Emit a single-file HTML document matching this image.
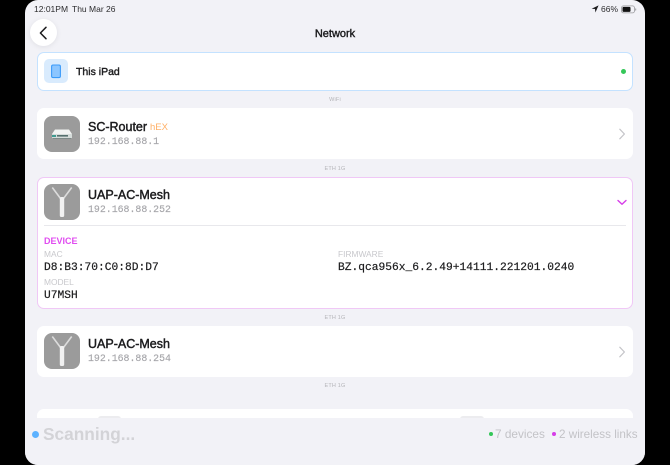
<!DOCTYPE html>
<html>
<head>
<meta charset="utf-8">
<style>
html,body{margin:0;padding:0;width:670px;height:465px;overflow:hidden;background:#000;}
body{font-family:"Liberation Sans",sans-serif;position:relative;}
.a{position:absolute;white-space:nowrap;}
#screen{position:absolute;left:25px;top:0;width:620px;height:465px;background:#f2f2f7;border-radius:13px;overflow:hidden;}
.card{position:absolute;left:37px;width:596px;background:#fff;border-radius:7px;box-sizing:border-box;}
.name{font-size:12.5px;color:#1c1c1e;line-height:16px;-webkit-text-stroke:.45px #1c1c1e;}
.ip{font-family:"Liberation Mono",monospace;font-size:9.9px;color:#a6a6aa;line-height:12px;-webkit-text-stroke:.15px #a6a6aa;}
.conn{font-size:5.5px;color:#b4b4b8;line-height:8px;width:596px;left:37px;text-align:center;letter-spacing:.2px;}
.lab{font-size:8.4px;color:#c8c8cc;line-height:10px;}
.val{font-family:"Liberation Mono",monospace;font-size:11.25px;color:#1c1c1e;line-height:14px;-webkit-text-stroke:.2px #1c1c1e;}
.ic{position:absolute;left:44px;width:36px;height:36px;}
</style>
</head>
<body>
<div id="screen"></div>

<div class="a" style="left:34px;top:4px;font-size:8.5px;line-height:10px;color:#2c2c2e;">12:01PM</div>
<div class="a" style="left:72px;top:4px;font-size:8.5px;line-height:10px;color:#2c2c2e;">Thu Mar 26</div>
<svg class="a" style="left:591px;top:5px" width="8" height="8" viewBox="0 0 8 8"><path d="M7.600.4 .6 3.700l3.400.3.4 3.500z" fill="#1c1c1e"/></svg>
<div class="a" style="left:601px;top:4px;font-size:8.5px;line-height:10px;color:#2c2c2e;">66%</div>
<svg class="a" style="left:621px;top:5px" width="16" height="9" viewBox="0 0 16 9"><rect x=".5" y=".9" width="13" height="7" rx="2" fill="none" stroke="#9a9a9e" stroke-width=".8"/><rect x="1.500" y="1.900" width="8" height="5" rx="1" fill="#111"/><rect x="14.200" y="3.400" width="1" height="2.200" rx=".5" fill="#9a9a9e"/></svg>

<div class="a" style="left:30px;top:19px;width:27px;height:27px;border-radius:50%;background:#fff;box-shadow:0 1px 6px rgba(0,0,0,.08);"></div>
<svg class="a" style="left:38px;top:26px" width="12" height="14" viewBox="0 0 12 14"><path d="M8 1.300 2.400 7 8 12.700" fill="none" stroke="#1c1c1e" stroke-width="1.500" stroke-linecap="round" stroke-linejoin="round"/></svg>
<div class="a" style="left:25px;width:620px;top:27px;text-align:center;font-size:11px;line-height:15px;color:#1c1c1e;-webkit-text-stroke:.4px #1c1c1e;">Network</div>

<!-- This iPad -->
<div class="card" style="top:52px;height:39px;border:1.5px solid #c4e2ff;"></div>
<div class="a" style="left:44px;top:59px;width:24px;height:24px;border-radius:5px;background:#d9ebfd;"></div>
<svg class="a" style="left:50px;top:64px" width="12" height="15" viewBox="0 0 12 15"><rect x="1.600" y="1" width="8.800" height="12.600" rx="1.500" fill="#8cc6ff" stroke="#3a9bfa" stroke-width="1.100"/></svg>
<div class="a" style="left:76px;top:65px;font-size:10.5px;line-height:15px;color:#1c1c1e;-webkit-text-stroke:.4px #1c1c1e;">This iPad</div>
<div class="a" style="left:621px;top:69px;width:5px;height:5px;border-radius:50%;background:#34c759;"></div>

<div class="a conn" style="top:96px;">WiFi</div>

<!-- SC-Router -->
<div class="card" style="top:108px;height:51px;"></div>
<svg class="ic" style="top:116px" viewBox="0 0 36 36"><rect width="36" height="36" rx="8" fill="#9b9b9b"/><path d="M11 13.500H25L28 18H8z" fill="#f1f3f2"/><rect x="8" y="18" width="20" height="4" fill="#d5dcda"/><rect x="8" y="19" width="4" height="2" fill="#3f9a90"/><rect x="13" y="19" width="11" height="1.600" fill="#55706e"/><rect x="9" y="22" width="18" height="1" fill="#7d8a88"/></svg>
<div class="a name" style="left:88px;top:119px;">SC-Router</div>
<div class="a" style="left:150px;top:122px;font-size:9.5px;line-height:12px;color:#ffb066;">hEX</div>
<div class="a ip" style="left:88px;top:136px;">192.168.88.1</div>
<svg class="a" style="left:618px;top:128px" width="8" height="12" viewBox="0 0 8 12"><path d="M1.800 1.200 6.400 6l-4.600 4.800" fill="none" stroke="#c4c4c8" stroke-width="1.200" stroke-linecap="round" stroke-linejoin="round"/></svg>

<div class="a conn" style="top:165px;">ETH 1G</div>

<!-- UAP expanded -->
<div class="card" style="top:177px;height:132px;border:1.5px solid #f0c8f6;"></div>
<svg class="ic" style="top:184px" viewBox="0 0 36 36"><rect width="36" height="36" rx="8" fill="#9b9b9b"/><path d="M8.300 3.500 16.500 14.500M27.700 3.500 19.500 14.500" stroke="#dcdcdc" stroke-width="1.600" fill="none"/><rect x="15.800" y="13" width="4.400" height="20" rx="1.500" fill="#f1f1f1"/></svg>
<div class="a name" style="left:88px;top:187px;">UAP-AC-Mesh</div>
<div class="a ip" style="left:88px;top:204px;">192.168.88.252</div>
<svg class="a" style="left:616px;top:198px" width="12" height="9" viewBox="0 0 12 9"><path d="M2 2.500 6 6.300l4-3.800" fill="none" stroke="#d63ee8" stroke-width="1.400" stroke-linecap="round" stroke-linejoin="round"/></svg>
<div class="a" style="left:44px;top:225px;width:582px;height:1px;background:#e8e8ec;"></div>
<div class="a" style="left:44px;top:236px;font-size:9px;font-weight:700;line-height:10px;color:#e04cf0;">DEVICE</div>
<div class="a lab" style="left:44px;top:249px;">MAC</div>
<div class="a val" style="left:44px;top:261px;">D8:B3:70:C0:8D:D7</div>
<div class="a lab" style="left:338px;top:249px;">FIRMWARE</div>
<div class="a val" style="left:338px;top:261px;">BZ.qca956x_6.2.49+14111.221201.0240</div>
<div class="a lab" style="left:44px;top:277px;">MODEL</div>
<div class="a val" style="left:44px;top:289px;">U7MSH</div>

<div class="a conn" style="top:314px;">ETH 1G</div>

<!-- UAP -->
<div class="card" style="top:326px;height:51px;"></div>
<svg class="ic" style="top:333px" viewBox="0 0 36 36"><rect width="36" height="36" rx="8" fill="#9b9b9b"/><path d="M8.300 3.500 16.500 14.500M27.700 3.500 19.500 14.500" stroke="#dcdcdc" stroke-width="1.600" fill="none"/><rect x="15.800" y="13" width="4.400" height="20" rx="1.500" fill="#f1f1f1"/></svg>
<div class="a name" style="left:88px;top:336px;">UAP-AC-Mesh</div>
<div class="a ip" style="left:88px;top:353px;">192.168.88.254</div>
<svg class="a" style="left:618px;top:346px" width="8" height="12" viewBox="0 0 8 12"><path d="M1.800 1.200 6.400 6l-4.600 4.800" fill="none" stroke="#c4c4c8" stroke-width="1.200" stroke-linecap="round" stroke-linejoin="round"/></svg>

<div class="a conn" style="top:382px;">ETH 1G</div>

<!-- Cut-off card -->
<div class="card" style="top:409px;height:20px;"></div>
<div class="a" style="left:98px;top:416px;width:23px;height:6px;border-radius:3px;background:#ececef;"></div>
<div class="a" style="left:460px;top:416px;width:24px;height:6px;border-radius:3px;background:#ececef;"></div>

<!-- Footer -->
<div class="a" style="left:25px;top:418px;width:620px;height:47px;background:#f2f2f7;border-radius:0 0 13px 13px;"></div>
<div class="a" style="left:32px;top:431px;width:7px;height:7px;border-radius:50%;background:#5db2ff;"></div>
<div class="a" style="left:43px;top:424px;font-size:17.300px;font-weight:700;line-height:20px;color:#d3d3d7;">Scanning...</div>
<div class="a" style="left:489px;top:432px;width:4px;height:4px;border-radius:50%;background:#34c759;"></div>
<div class="a" style="left:495px;top:427px;font-size:11.800px;line-height:15px;color:#c3c3c7;">7 devices</div>
<div class="a" style="left:552px;top:432px;width:4px;height:4px;border-radius:50%;background:#d63ee8;"></div>
<div class="a" style="left:559px;top:427px;font-size:11.700px;line-height:15px;color:#c3c3c7;">2 wireless links</div>
</body>
</html>
